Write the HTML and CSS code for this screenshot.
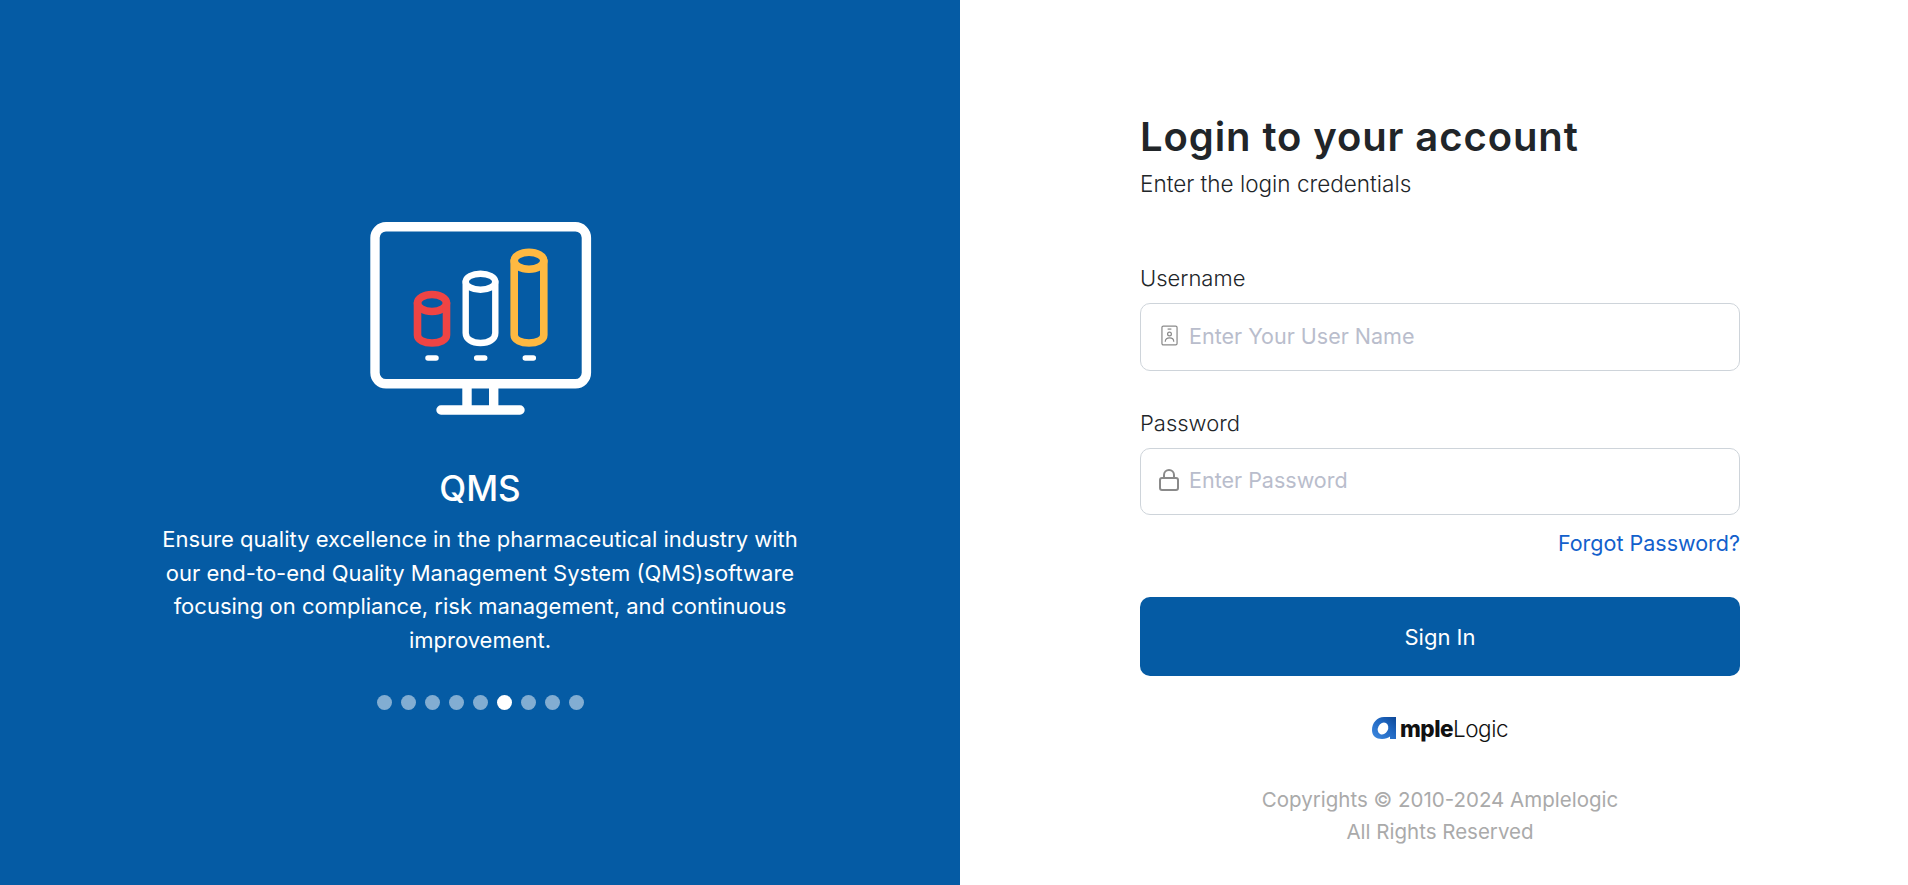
FILE: index.html
```html
<!DOCTYPE html>
<html lang="en">
<head>
  <meta charset="UTF-8">
  <title>Login</title>
  <link rel="stylesheet" href="styles.css">
</head>
<body>
  <div class="login-page">
    <section class="promo">
      <svg class="promo-icon" viewBox="0 0 280 240" width="280" height="240" fill="none" stroke-linecap="round" stroke-linejoin="round">
        <rect x="35" y="26.8" width="211.4" height="157" rx="11" stroke="#fff" stroke-width="9.4"/>
        <path d="M127 186V210M153.7 186V210M101 210H180" stroke="#fff" stroke-width="9.4"/>
        <g stroke="#ef4444" stroke-width="7.6">
          <ellipse cx="92" cy="103" rx="14.5" ry="8.5"/>
          <path d="M77.5 103V135C77.5 140 84 143 92 143S106.5 140 106.5 135V103"/>
        </g>
        <g stroke="#fff" stroke-width="6.4">
          <ellipse cx="140.5" cy="81.7" rx="14.8" ry="8"/>
          <path d="M125.7 81.7V133C125.7 139 132 143 140.5 143S155.3 139 155.3 133V81.7"/>
        </g>
        <g stroke="#ffb941" stroke-width="7.6">
          <ellipse cx="189" cy="60.7" rx="14.8" ry="8.5"/>
          <path d="M174.2 60.7V135C174.2 140 181 143 189 143S203.8 140 203.8 135V60.7"/>
        </g>
        <path d="M88 158H96M136.7 158H144.7M185.3 158H193.3" stroke="#fff" stroke-width="5.5"/>
      </svg>
      <h2 class="promo-title">QMS</h2>
      <p class="promo-text">Ensure quality excellence in the pharmaceutical industry with our end-to-end Quality Management System (QMS)software focusing on compliance, risk management, and continuous improvement.</p>
      <div class="dots">
        <span class="dot"></span>
        <span class="dot"></span>
        <span class="dot"></span>
        <span class="dot"></span>
        <span class="dot"></span>
        <span class="dot active"></span>
        <span class="dot"></span>
        <span class="dot"></span>
        <span class="dot"></span>
      </div>
    </section>

    <main class="login">
      <form class="login-form">
        <h1>Login to your account</h1>
        <p class="subtitle">Enter the login credentials</p>

        <label class="field-label" for="username">Username</label>
        <div class="input-box">
          <span class="input-icon">
            <svg viewBox="0 0 18 22" width="17" height="21" fill="none" stroke="#8a8a8a" stroke-width="1.3">
              <rect x="1" y="1" width="16" height="20" rx="1.5"/>
              <path d="M7 4.2H11"/>
              <circle cx="9" cy="9.5" r="2"/>
              <path d="M4.5 17.5C4.5 14.8 6.5 13.6 9 13.6S13.5 14.8 13.5 17.5"/>
            </svg>
          </span>
          <input id="username" type="text" placeholder="Enter Your User Name">
        </div>

        <label class="field-label" for="password">Password</label>
        <div class="input-box input-box-last">
          <span class="input-icon">
            <svg viewBox="0 0 20 22" width="20" height="22" fill="none" stroke="#8a8a8a" stroke-width="2">
              <rect x="1" y="9" width="18" height="12" rx="2"/>
              <path d="M5 9V6A5 5 0 0 1 15 6V9"/>
            </svg>
          </span>
          <input id="password" type="password" placeholder="Enter Password">
        </div>

        <div class="forgot-row"><a href="#" class="forgot">Forgot Password?</a></div>

        <button type="button" class="sign-in">Sign In</button>

        <div class="brand">
          <svg class="brand-mark" viewBox="0 0 24 22" width="24" height="22">
            <defs>
              <linearGradient id="ring" x1="0" y1="1" x2="1" y2="0">
                <stop offset="0" stop-color="#3f8ae0"/>
                <stop offset="0.6" stop-color="#1f66c0"/>
                <stop offset="1" stop-color="#0d4796"/>
              </linearGradient>
            </defs>
            <path d="M0 13C0 6 5 0 12 0H24V22H18V19.500C16 21 13.500 22 10 22C4 22 0 19 0 13Z" fill="url(#ring)"/>
            <ellipse cx="11" cy="11.500" rx="5" ry="6.200" transform="rotate(28 11 11.500)" fill="#fff"/>
          </svg>
          <span class="brand-name"><b>mple</b>Logic</span>
        </div>

        <p class="copyright">Copyrights © 2010-2024 Amplelogic<br>All Rights Reserved</p>
      </form>
    </main>
  </div>
</body>
</html>
```

FILE: styles.css
```css
* {
  box-sizing: border-box;
}
body {
  margin: 0;
  font-family: "Inter", "Open Sans", sans-serif;
  color: #212529;
  background-color: #fff;
}
.login-page {
  display: flex;
  height: 885px;
}
.promo {
  width: 960px;
  background-color: #055ba4;
  color: #fff;
  display: flex;
  flex-direction: column;
  align-items: center;
  padding-top: 200px;
}
.promo-icon {
  display: block;
}
.promo-title {
  margin: 27px 0 0;
  font-size: 35px;
  line-height: 42px;
  font-weight: 500;
}
.promo-text {
  margin: 14px 0 0;
  width: 660px;
  text-align: center;
  font-size: 22px;
  line-height: 33.6px;
}
.dots {
  display: flex;
  gap: 9px;
  margin-top: 38px;
}
.dot {
  width: 15px;
  height: 15px;
  border-radius: 50%;
  background-color: rgba(255, 255, 255, 0.5);
}
.dot.active {
  background-color: #fff;
}
.login {
  flex: 1;
  padding-left: 180px;
}
.login-form {
  width: 600px;
  padding-top: 110px;
}
h1 {
  margin: 0;
  font-size: 40px;
  line-height: 54px;
  font-weight: 600;
  letter-spacing: 0.9px;
}
.subtitle {
  margin: 5px 0 0;
  font-size: 22.5px;
  line-height: 30px;
  font-weight: 300;
}
.field-label {
  display: block;
  margin-bottom: 10px;
  font-size: 22px;
  line-height: 30px;
  font-weight: 300;
}
.subtitle + .field-label {
  margin-top: 64px;
}
.input-box {
  display: flex;
  align-items: center;
  gap: 8px;
  height: 68px;
  margin-bottom: 37px;
  padding-left: 18px;
  padding-bottom: 3px;
  border: 1px solid #ced4da;
  border-radius: 10px;
}
.input-box-last {
  height: 67px;
  margin-bottom: 0;
}
.input-box input {
  flex: 1;
  border: none;
  outline: none;
  font: inherit;
  font-size: 21.5px;
  color: #212529;
  background: transparent;
}
.input-box input::placeholder {
  color: #b9bdcc;
  opacity: 1;
}
.input-icon {
  flex: none;
  display: flex;
  justify-content: center;
  width: 20px;
}
.forgot-row {
  margin-top: 13px;
  text-align: right;
}
.forgot {
  font-size: 21.5px;
  line-height: 30px;
  color: #1260cc;
  text-decoration: none;
}
.sign-in {
  display: block;
  width: 100%;
  height: 79px;
  margin-top: 39px;
  border: none;
  border-radius: 10px;
  background-color: #055ba4;
  color: #fff;
  font: inherit;
  font-size: 22px;
  font-weight: 400;
}
.brand {
  display: flex;
  justify-content: center;
  align-items: center;
  gap: 4px;
  margin-top: 40px;
  height: 24px;
}
.brand-name {
  font-size: 22.5px;
  letter-spacing: -0.5px;
  color: #111;
  font-weight: 300;
}
.brand-name b {
  font-weight: 800;
}
.copyright {
  margin: 44px 0 0;
  text-align: center;
  font-size: 20.5px;
  line-height: 32px;
  color: #aaa;
}
```
